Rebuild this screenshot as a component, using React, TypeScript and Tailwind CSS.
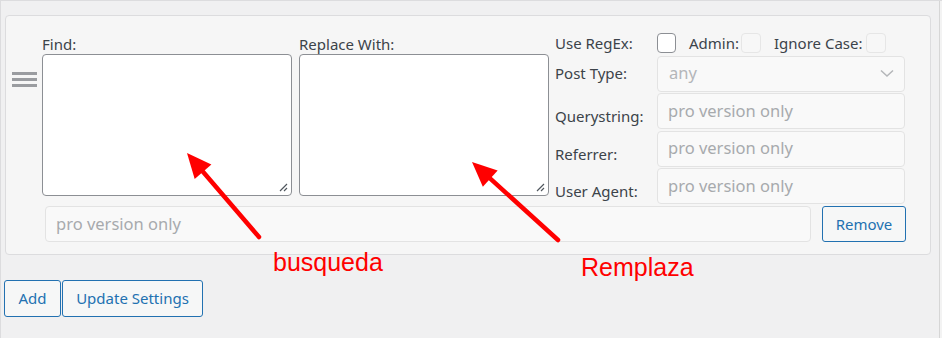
import React from 'react';

const font = { fontFamily: '"Noto Sans", "Open Sans", Arial, sans-serif' };

const proRows = [
  ['Querystring:', 'mt-[10px]'],
  ['Referrer:', 'mt-[10px]'],
  ['User Agent:', 'mt-[10px]'],
];

function Resizer() {
  return (
    <svg className="absolute bottom-[3px] right-[3px]" width="9" height="9" viewBox="0 0 9 9">
      <path d="M1 8 L8 1 M5 8 L8 5" stroke="#50575e" strokeWidth="1.2" />
    </svg>
  );
}

function Arrow({ x1, y1, x2, y2 }: { x1: number; y1: number; x2: number; y2: number }) {
  const a = Math.atan2(y2 - y1, x2 - x1);
  const len = 27;
  const spread = 0.42;
  const p1 = [x2 - len * Math.cos(a - spread), y2 - len * Math.sin(a - spread)];
  const p2 = [x2 - len * Math.cos(a + spread), y2 - len * Math.sin(a + spread)];
  const bx = x2 - 18 * Math.cos(a);
  const by = y2 - 18 * Math.sin(a);
  return (
    <g>
      <line x1={x1} y1={y1} x2={bx} y2={by} stroke="#ff0000" strokeWidth="4.5" strokeLinecap="round" />
      <polygon points={`${x2},${y2} ${p1[0]},${p1[1]} ${p2[0]},${p2[1]}`} fill="#ff0000" />
    </g>
  );
}

export default function App() {
  return (
    <div className="relative h-[338px] w-[942px] overflow-hidden border-l border-t border-[#dcdcde] bg-[#f0f0f1] text-[15px] text-[#3c434a]" style={font}>
      <div className="absolute right-0 top-0 h-full w-[3px] border-l border-[#d6d6d6] bg-[#f3f3f3]" />

      <div className="ml-[4px] mt-[14px] w-[926px] rounded-[4px] border border-[#dcdcde] bg-[#f6f6f6] pb-3 pt-4">
        <div className="flex">
          <div className="flex w-[36px] flex-col gap-[3px] pl-[6px] pt-[40px]">
            <span className="block h-[3px] w-[25px] bg-[#9a9ca0]" />
            <span className="block h-[3px] w-[25px] bg-[#9a9ca0]" />
            <span className="block h-[3px] w-[25px] bg-[#9a9ca0]" />
          </div>

          <div className="flex w-[250px] flex-col">
            <label className="flex h-[22px] items-end leading-[20px]">Find:</label>
            <div className="relative h-[142px] w-[250px] rounded-[4px] border border-[#8c8f94] bg-white">
              <Resizer />
            </div>
          </div>

          <div className="ml-[7px] flex w-[250px] flex-col">
            <label className="flex h-[22px] items-end leading-[20px]">Replace With:</label>
            <div className="relative h-[142px] w-[250px] rounded-[4px] border border-[#8c8f94] bg-white">
              <Resizer />
            </div>
          </div>

          <div className="ml-[6px] grid w-[351px] grid-cols-[102px_249px] gap-y-[1.5px]">
            <span className="flex h-[22px] items-center">Use RegEx:</span>
            <div className="flex h-[22px] items-center">
              <span className="block h-[20px] w-[19px] rounded-[4px] border border-[#8c8f94] bg-white" />
              <span className="ml-[13px]">Admin:</span>
              <span className="ml-[2px] block h-[20px] w-[20px] rounded-[4px] border border-[#e6e6e6] bg-[#f7f7f7]" />
              <span className="ml-[13px]">Ignore Case:</span>
              <span className="ml-[4px] block h-[20px] w-[20px] rounded-[4px] border border-[#e6e6e6] bg-[#f7f7f7]" />
            </div>

            <span className="flex h-9 items-center">Post Type:</span>
            <div className="flex h-9 w-[248px] items-center justify-between rounded-[4px] border border-[#e3e3e3] bg-[#f9f9f9] pl-[11px] pr-[10px] text-[16.5px] text-[#b4b6b9]">
              <span>any</span>
              <svg width="14" height="9" viewBox="0 0 14 9">
                <path d="M1 1.5 L7 7 L13 1.5" fill="none" stroke="#b4b6b9" strokeWidth="1.5" />
              </svg>
            </div>

            {proRows.map(([label, mt]) => (
              <React.Fragment key={label}>
                <span className={`${mt} h-[26px] leading-[26px]`}>{label}</span>
                <div className="flex h-9 w-[248px] items-center rounded-[4px] border border-[#e3e3e3] bg-[#f9f9f9] pl-[10px] text-[16.5px] text-[#a7aaad]">
                  pro version only
                </div>
              </React.Fragment>
            ))}
          </div>
        </div>

        <div className="ml-[39px] mt-[2px] flex w-[861px] items-center gap-[11px]">
          <div className="flex h-9 flex-1 items-center rounded-[4px] border border-[#e3e3e3] bg-[#f9f9f9] pl-[10px] text-[16.5px] text-[#a7aaad]">
            pro version only
          </div>
          <button className="h-[36px] w-[84px] rounded-[3px] border border-[#2271b1] bg-[#f6f7f7] text-[15px] text-[#2271b1]">
            Remove
          </button>
        </div>
      </div>

      <div className="ml-[3px] mt-[25px] flex gap-px">
        <button className="h-[37px] w-[57px] rounded-[3px] border border-[#2271b1] bg-[#f6f7f7] text-[15px] text-[#2271b1]">Add</button>
        <button className="h-[37px] w-[141px] rounded-[3px] border border-[#2271b1] bg-[#f6f7f7] text-[15px] text-[#2271b1]">Update Settings</button>
      </div>

      <svg className="pointer-events-none absolute left-0 top-0" width="942" height="338">
        <Arrow x1={258} y1={236} x2={186} y2={152} />
        <Arrow x1={557} y1={239} x2={471} y2={161} />
      </svg>
      <span className="absolute left-[272px] top-[249px] text-[25px] leading-[25px] text-[#ff0000]" style={{ fontFamily: '"Liberation Sans", Arial, sans-serif' }}>
        busqueda
      </span>
      <span className="absolute left-[580px] top-[254px] text-[25px] leading-[25px] text-[#ff0000]" style={{ fontFamily: '"Liberation Sans", Arial, sans-serif' }}>
        Remplaza
      </span>
    </div>
  );
}
